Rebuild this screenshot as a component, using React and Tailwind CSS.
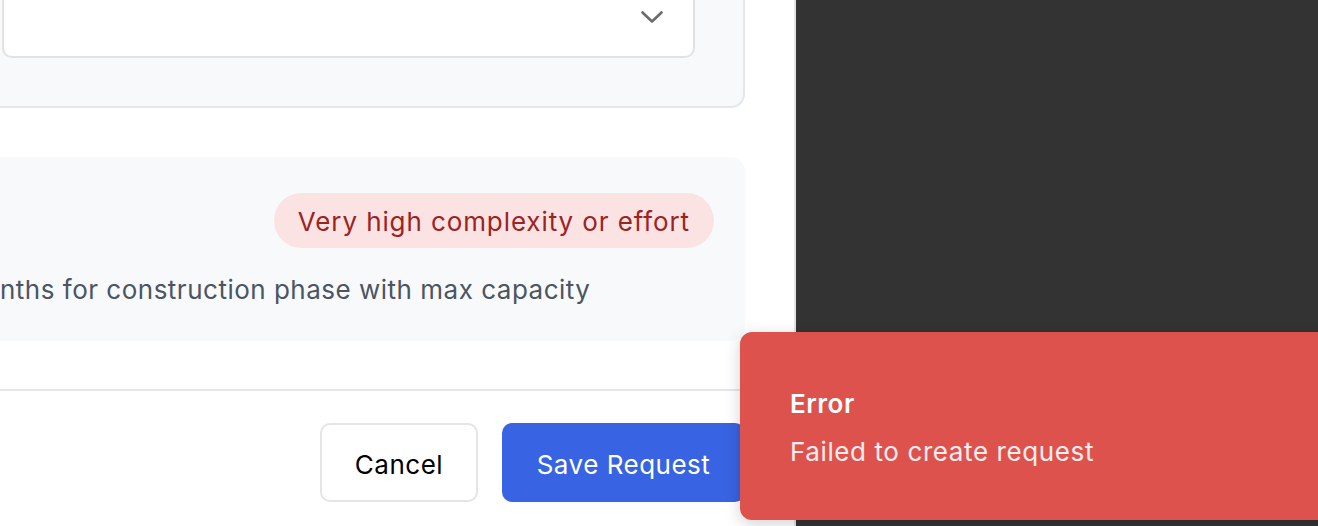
export default function App() {
  return (
    <div className="relative flex h-[526px] w-[1318px] overflow-hidden bg-white tracking-[0.5px]" style={{ fontFamily: 'Inter, "Noto Sans", sans-serif' }}>
      <div className="w-[796px] shrink-0 overflow-hidden border-r-2 border-[#e4e4e7] bg-white">
        <div className="-ml-[24px] flex flex-col pr-[49px]">
          {/* Top card with select */}
          <div className="-mt-[72px] rounded-[14px] border-2 border-[#e5e7eb] bg-[#f8f9fb] pb-[48px] pl-[24px] pr-[48px] pt-[48px]">
            <div className="flex h-[80px] items-center justify-end rounded-[10px] border-2 border-[#e2e2e4] bg-white pr-[30px]">
              <svg width="22" height="12" viewBox="0 0 22 12" fill="none" className="mb-[2px]">
                <polyline points="1.5,1.5 11,10.5 20.5,1.5" stroke="#6b6b6f" strokeWidth="2.6" strokeLinecap="round" strokeLinejoin="round" />
              </svg>
            </div>
          </div>

          {/* Second card */}
          <div className="mt-[49px] flex flex-col rounded-[14px] bg-[#f8f9fb] pb-[33px] pl-[24px] pr-[31px] pt-[36px]">
            <div className="flex justify-end">
              <span className="flex h-[55px] items-center rounded-full bg-[#fbe3e3] px-[24px] pt-[2px] text-[26px] tracking-[0.9px] text-[#9b2423]">
                Very high complexity or effort
              </span>
            </div>
            <p className="mt-[24px] whitespace-nowrap text-[26px] leading-[36px] text-[#4b5563]">
              nths for construction phase with max capacity
            </p>
          </div>

          {/* Divider */}
          <div className="mt-[48px] h-[2px] bg-[#e5e7eb]" />

          {/* Footer buttons */}
          <div className="mt-[32px] flex justify-end gap-[24px]">
            <button className="h-[79px] w-[158px] rounded-[10px] border-2 border-[#e5e5e7] bg-white pt-[3px] text-[26px] text-black">
              Cancel
            </button>
            <button className="h-[79px] w-[243px] rounded-[10px] bg-[#3863e2] pt-[3px] text-[26px] text-white">
              Save Request
            </button>
          </div>
        </div>
      </div>
      <div className="flex-1 bg-[#333333]" />

      {/* Toast */}
      <div className="absolute left-[740px] top-[332px] flex h-[188px] w-[640px] flex-col justify-center gap-[12px] rounded-[12px] bg-[#dd524d] pl-[50px] pt-[4px] shadow-[0_4px_16px_rgba(0,0,0,0.18)]">
        <div className="text-[26px] font-semibold leading-[36px] text-white">Error</div>
        <div className="text-[26px] leading-[36px] tracking-[0.6px] text-white/90">Failed to create request</div>
      </div>
    </div>
  );
}
